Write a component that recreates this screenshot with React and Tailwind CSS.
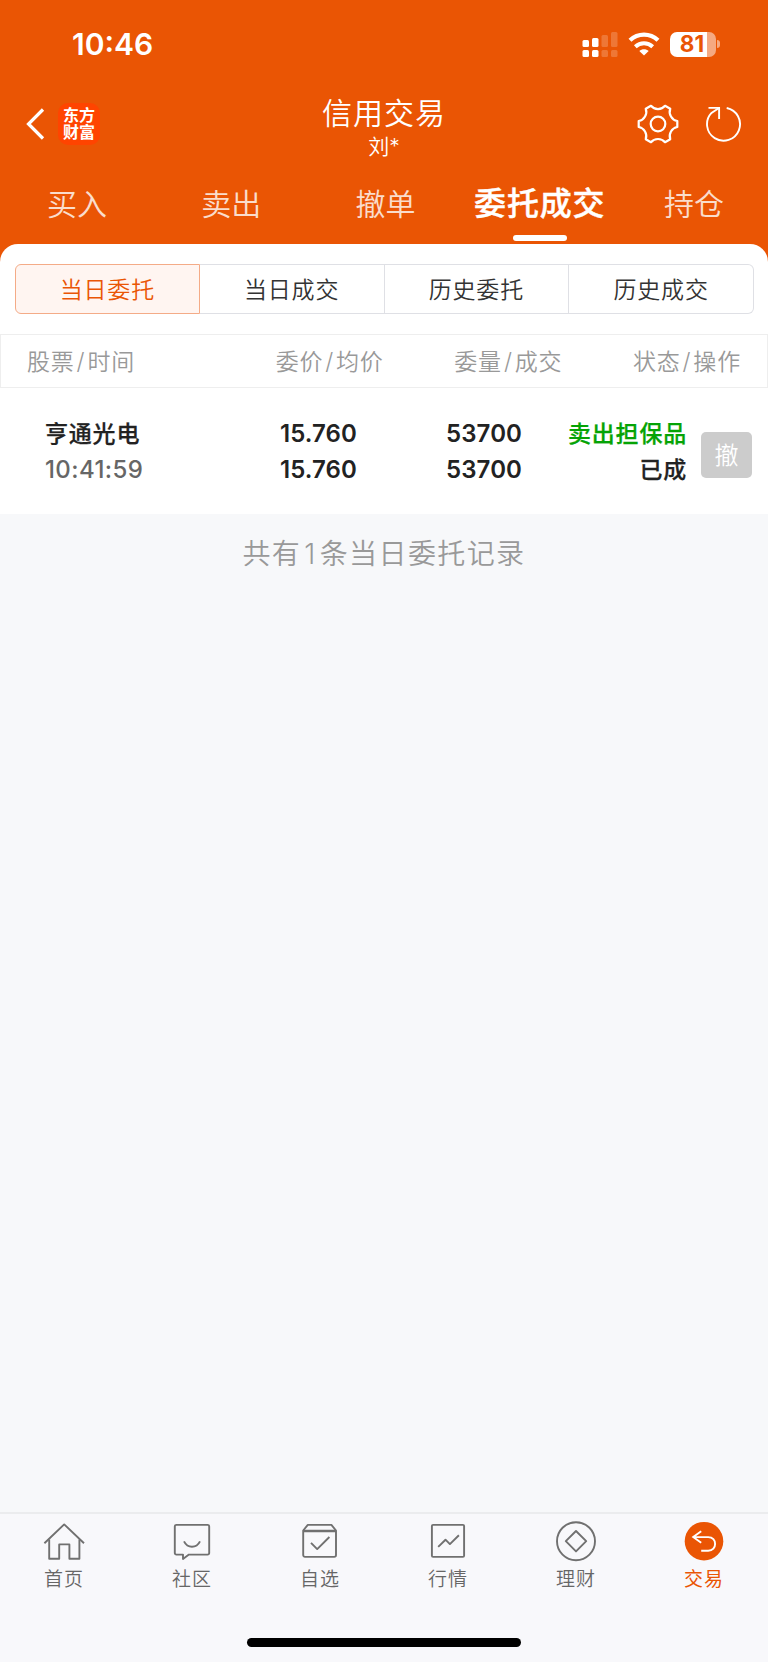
import clsx from 'clsx';

const tabs = ['买入', '卖出', '撤单', '委托成交', '持仓'];
const filters = ['当日委托', '当日成交', '历史委托', '历史成交'];
const columns = [['股票', '时间'], ['委价', '均价'], ['委量', '成交'], ['状态', '操作']];

const navItems = [
  { label: '首页', icon: HomeIcon },
  { label: '社区', icon: CommunityIcon },
  { label: '自选', icon: WatchlistIcon },
  { label: '行情', icon: MarketIcon },
  { label: '理财', icon: WealthIcon },
  { label: '交易', icon: TradeIcon, active: true },
];

function NavSvg({ children }) {
  return (
    <svg width="44" height="44" viewBox="0 0 44 44" fill="none" stroke="#707070" strokeWidth="1.9" strokeLinejoin="round">
      {children}
    </svg>
  );
}

function HomeIcon() {
  return (
    <NavSvg>
      <path d="M2.4 23.3 22.2 4.4 42 23.3" />
      <path d="M7.2 19.5v19.3h10V24.4h10.2v14.4h10V19.5" />
    </NavSvg>
  );
}

function CommunityIcon() {
  return (
    <NavSvg>
      <path d="M6.4 4.9h31.2a1.6 1.6 0 0 1 1.6 1.6v26.5a1.6 1.6 0 0 1-1.6 1.6H18.9L13 39v-4.4H6.4a1.6 1.6 0 0 1-1.6-1.6V6.5a1.6 1.6 0 0 1 1.6-1.6Z" />
      <path d="M14 21.3c3.6 7.2 12.4 7.2 16 0" />
    </NavSvg>
  );
}

function WatchlistIcon() {
  return (
    <NavSvg>
      <path d="M5.2 10.5v24.6a1.8 1.8 0 0 0 1.8 1.8h29.2a1.8 1.8 0 0 0 1.8-1.8V10.5l-4.6-5.6H9.8L5.2 10.5Z" />
      <path d="M5.2 11H38" strokeWidth="2.4" />
      <path d="m13 22.8 6.2 6.3L31.4 17" />
    </NavSvg>
  );
}

function MarketIcon() {
  return (
    <NavSvg>
      <rect x="5.9" y="4.9" width="32.2" height="32" rx="1.2" />
      <path d="m12.2 26.9 7.3-7.2 4.4 4.4 9-8.8" />
    </NavSvg>
  );
}

function WealthIcon() {
  return (
    <NavSvg>
      <circle cx="22" cy="21.2" r="19" />
      <path d="M22 11 32.2 21.2 22 31.4 11.8 21.2Z" />
    </NavSvg>
  );
}

function TradeIcon() {
  return (
    <svg width="44" height="44" viewBox="0 0 44 44" fill="none" stroke="#fff" strokeWidth="1.9">
      <circle cx="22" cy="21.2" r="19.3" fill="#ea5504" stroke="none" />
      <path d="M19.2 11.3 11.2 17.1l8 5.6M11.5 17.1h14.7c9.2 0 9.2 13.7 0 13.7h-7" />
    </svg>
  );
}

function StatusBar() {
  return (
    <div className="flex h-[88px] items-center justify-between pl-[72px] pr-12">
      <span className="text-[30px] font-semibold leading-none">10:46</span>
      <div className="flex items-center">
        <svg width="36" height="26" viewBox="0 0 36 26" fill="#fff">
          <rect x="0.5" y="9" width="6.5" height="7" rx="1.5" />
          <rect x="0.5" y="19" width="6.5" height="7" rx="1.5" />
          <rect x="10" y="7" width="6.5" height="9" rx="1.5" />
          <rect x="10" y="19" width="6.5" height="7" rx="1.5" />
          <g opacity="0.2">
            <rect x="19.5" y="4" width="6.5" height="12" rx="1.5" />
            <rect x="19.5" y="19" width="6.5" height="7" rx="1.5" />
            <rect x="29" y="1" width="6.5" height="15" rx="1.5" />
            <rect x="29" y="19" width="6.5" height="7" rx="1.5" />
          </g>
        </svg>
        <svg className="ml-2.5" width="32" height="24" viewBox="0 0 32 24" fill="none" stroke="#fff" strokeWidth="4.3">
          <path d="M2 8.3c8-7.5 20-7.5 28 0" />
          <path d="M7.3 14.8c5-4.6 12.4-4.6 17.4 0" strokeWidth="4" />
          <path d="m16 23.5-4.7-4.6c2.6-2.3 6.8-2.3 9.4 0Z" fill="#fff" stroke="none" />
        </svg>
        <div className="ml-2.5 flex h-[25px] w-[46px] items-center justify-center rounded-[7px] bg-linear-to-r from-white from-80% to-[#f5a982] to-80% pr-0.5 text-[22.5px] font-bold leading-none text-[#ea5504]">
          81
        </div>
        <div className="ml-px h-2 w-[3px] rounded-r-full bg-[#f5a982]" />
      </div>
    </div>
  );
}

function Header() {
  return (
    <header className="text-white">
      <StatusBar />
      <div className="flex h-[72px] items-center justify-between px-[25px]">
        <div className="flex w-40 items-center">
          <svg width="20" height="32" viewBox="0 0 20 32" fill="none" stroke="#fff" strokeWidth="3.2">
            <path d="M18 1.5 3.5 16 18 30.5" />
          </svg>
          <div className="ml-[13px] flex h-[42px] w-[42px] flex-col items-center justify-center rounded-[10px] bg-[#ff4400] text-[16px] font-bold leading-[17px]">
            <span>东方</span>
            <span>财富</span>
          </div>
        </div>
        <div className="flex flex-col items-center pt-2">
          <h1 className="text-[30px] font-[350] leading-[38px] tracking-[1px]">信用交易</h1>
          <p className="text-[21px] font-[350] leading-[30px]">刘*</p>
        </div>
        <div className="flex w-40 items-center justify-end">
          <svg width="42" height="42" viewBox="0 0 42 42" fill="none" stroke="#fff" strokeWidth="2.2" strokeLinejoin="round">
            <path d="M13.95 2.8C17.5 7.1 24.5 7.1 28.05 2.8L33.25 5.8C31.29 11.02 34.79 17.08 40.3 18V24C34.79 24.92 31.29 30.98 33.25 36.2L28.05 39.2C24.5 34.9 17.5 34.9 13.95 39.2L8.75 36.2C10.71 30.98 7.21 24.92 1.7 24V18C7.21 17.08 10.71 11.02 8.75 5.8Z" />
            <circle cx="21" cy="21" r="7.3" />
          </svg>
          <svg className="ml-[26px]" width="38" height="38" viewBox="0 0 38 38" fill="none" stroke="#fff" strokeWidth="1.9">
            <path d="M21.7 3A16.5 16.5 0 1 1 6.5 7.9L14 3" />
            <path d="M3.5 2.9h10.600v11" />
          </svg>
        </div>
      </div>
      <nav className="-mr-[3px] grid h-[84px] grid-cols-5 pt-[3px]">
        {tabs.map((tab) => (
          <button key={tab} className="flex flex-col items-center whitespace-nowrap">
            <span className={clsx('mt-[17px] h-12 leading-[48px]', tab === '委托成交' ? 'text-[32px] font-medium tracking-[0.8px] [-webkit-text-stroke:0.4px]' : 'text-[30px] font-[350] opacity-80')}>
              {tab}
            </span>
            {tab === '委托成交' && <span className="mt-[7px] h-1.5 w-[54px] rounded-full bg-white" />}
          </button>
        ))}
      </nav>
    </header>
  );
}

function OrderRow() {
  return (
    <div className="flex h-[126px] items-center pt-0.5 text-[24px] font-semibold leading-9 tracking-[0.1px] text-[#222]">
      <div className="w-[200px] pl-[45px]">
        <p className="text-[23px] font-medium tracking-[0.8px] [-webkit-text-stroke:0.25px]">亨通光电</p>
        <p className="font-medium tracking-[0.4px] text-[#666]">10:41:59</p>
      </div>
      <div className="w-[157px] text-right">
        <p>15.760</p>
        <p>15.760</p>
      </div>
      <div className="w-[165px] text-right">
        <p>53700</p>
        <p>53700</p>
      </div>
      <div className="w-[165px] text-right text-[23px] font-medium tracking-[0.8px] [-webkit-text-stroke:0.25px]">
        <p className="text-[#05a305]">卖出担保品</p>
        <p>已成</p>
      </div>
      <button className="ml-3.5 mt-1.5 h-[46px] w-[51px] rounded-[5px] bg-[#ccc] pt-0.5 text-[24px] font-[350] text-white">撤</button>
    </div>
  );
}

export default function App() {
  return (
    <div className="flex h-[1662px] w-[768px] flex-col overflow-hidden bg-[#f7f8fa] font-['Inter','Noto_Sans_CJK_SC',sans-serif]" lang="zh-CN">
      <div className="bg-[#ea5504]">
        <Header />
        <div className="h-5 rounded-t-[18px] bg-white" />
      </div>

      <main className="flex flex-1 flex-col">
        <div className="bg-white">
          <div className="ml-[15px] mr-3.5 grid h-[50px] grid-cols-4 text-[23px] font-[350] tracking-[0.8px] text-[#333]">
            {filters.map((name, i) => (
              <button
                key={name}
                className={clsx(
                  'border pt-0.5',
                  i === 0 && 'rounded-l-md border-[#f4ab87] bg-[#fff5f1] text-[#ea5504]',
                  i > 0 && 'border-l-0 border-[#dfe0e5]',
                  i === 3 && 'rounded-r-md'
                )}
              >
                {name}
              </button>
            ))}
          </div>
          <div className="mt-5 flex h-[54px] items-center justify-between border border-[#eee] px-[26px] pt-0.5 text-[23px] font-[350] tracking-[0.8px] text-[#999]">
            {columns.map(([first, second], i) => (
              <span key={first} className={clsx('w-[178px]', i > 0 && 'text-right')}>
                {first}<span className="mx-0.5">/</span>{second}
              </span>
            ))}
          </div>
          <OrderRow />
        </div>
        <p className="mt-5 text-center text-[28px] font-[350] leading-10 tracking-[1.4px] text-[#999]">
          共有<span className="mx-[3px]">1</span>条当日委托记录
        </p>
      </main>

      <footer className="h-[150px] border-t-2 border-[#ebecee] bg-[#f8f8fb]">
        <div className="grid grid-cols-6 pt-1.5">
          {navItems.map(({ label, icon: Icon, active }) => (
            <button key={label} className={clsx('flex flex-col items-center text-[19px] leading-7 tracking-[1px]', active ? 'text-[#ea5504]' : 'font-[350] text-[#666]')}>
              <Icon />
              <span className="mt-0.5">{label}</span>
            </button>
          ))}
        </div>
        <div className="mx-auto mt-11 h-[9px] w-[274px] rounded-full bg-black" />
      </footer>
    </div>
  );
}
